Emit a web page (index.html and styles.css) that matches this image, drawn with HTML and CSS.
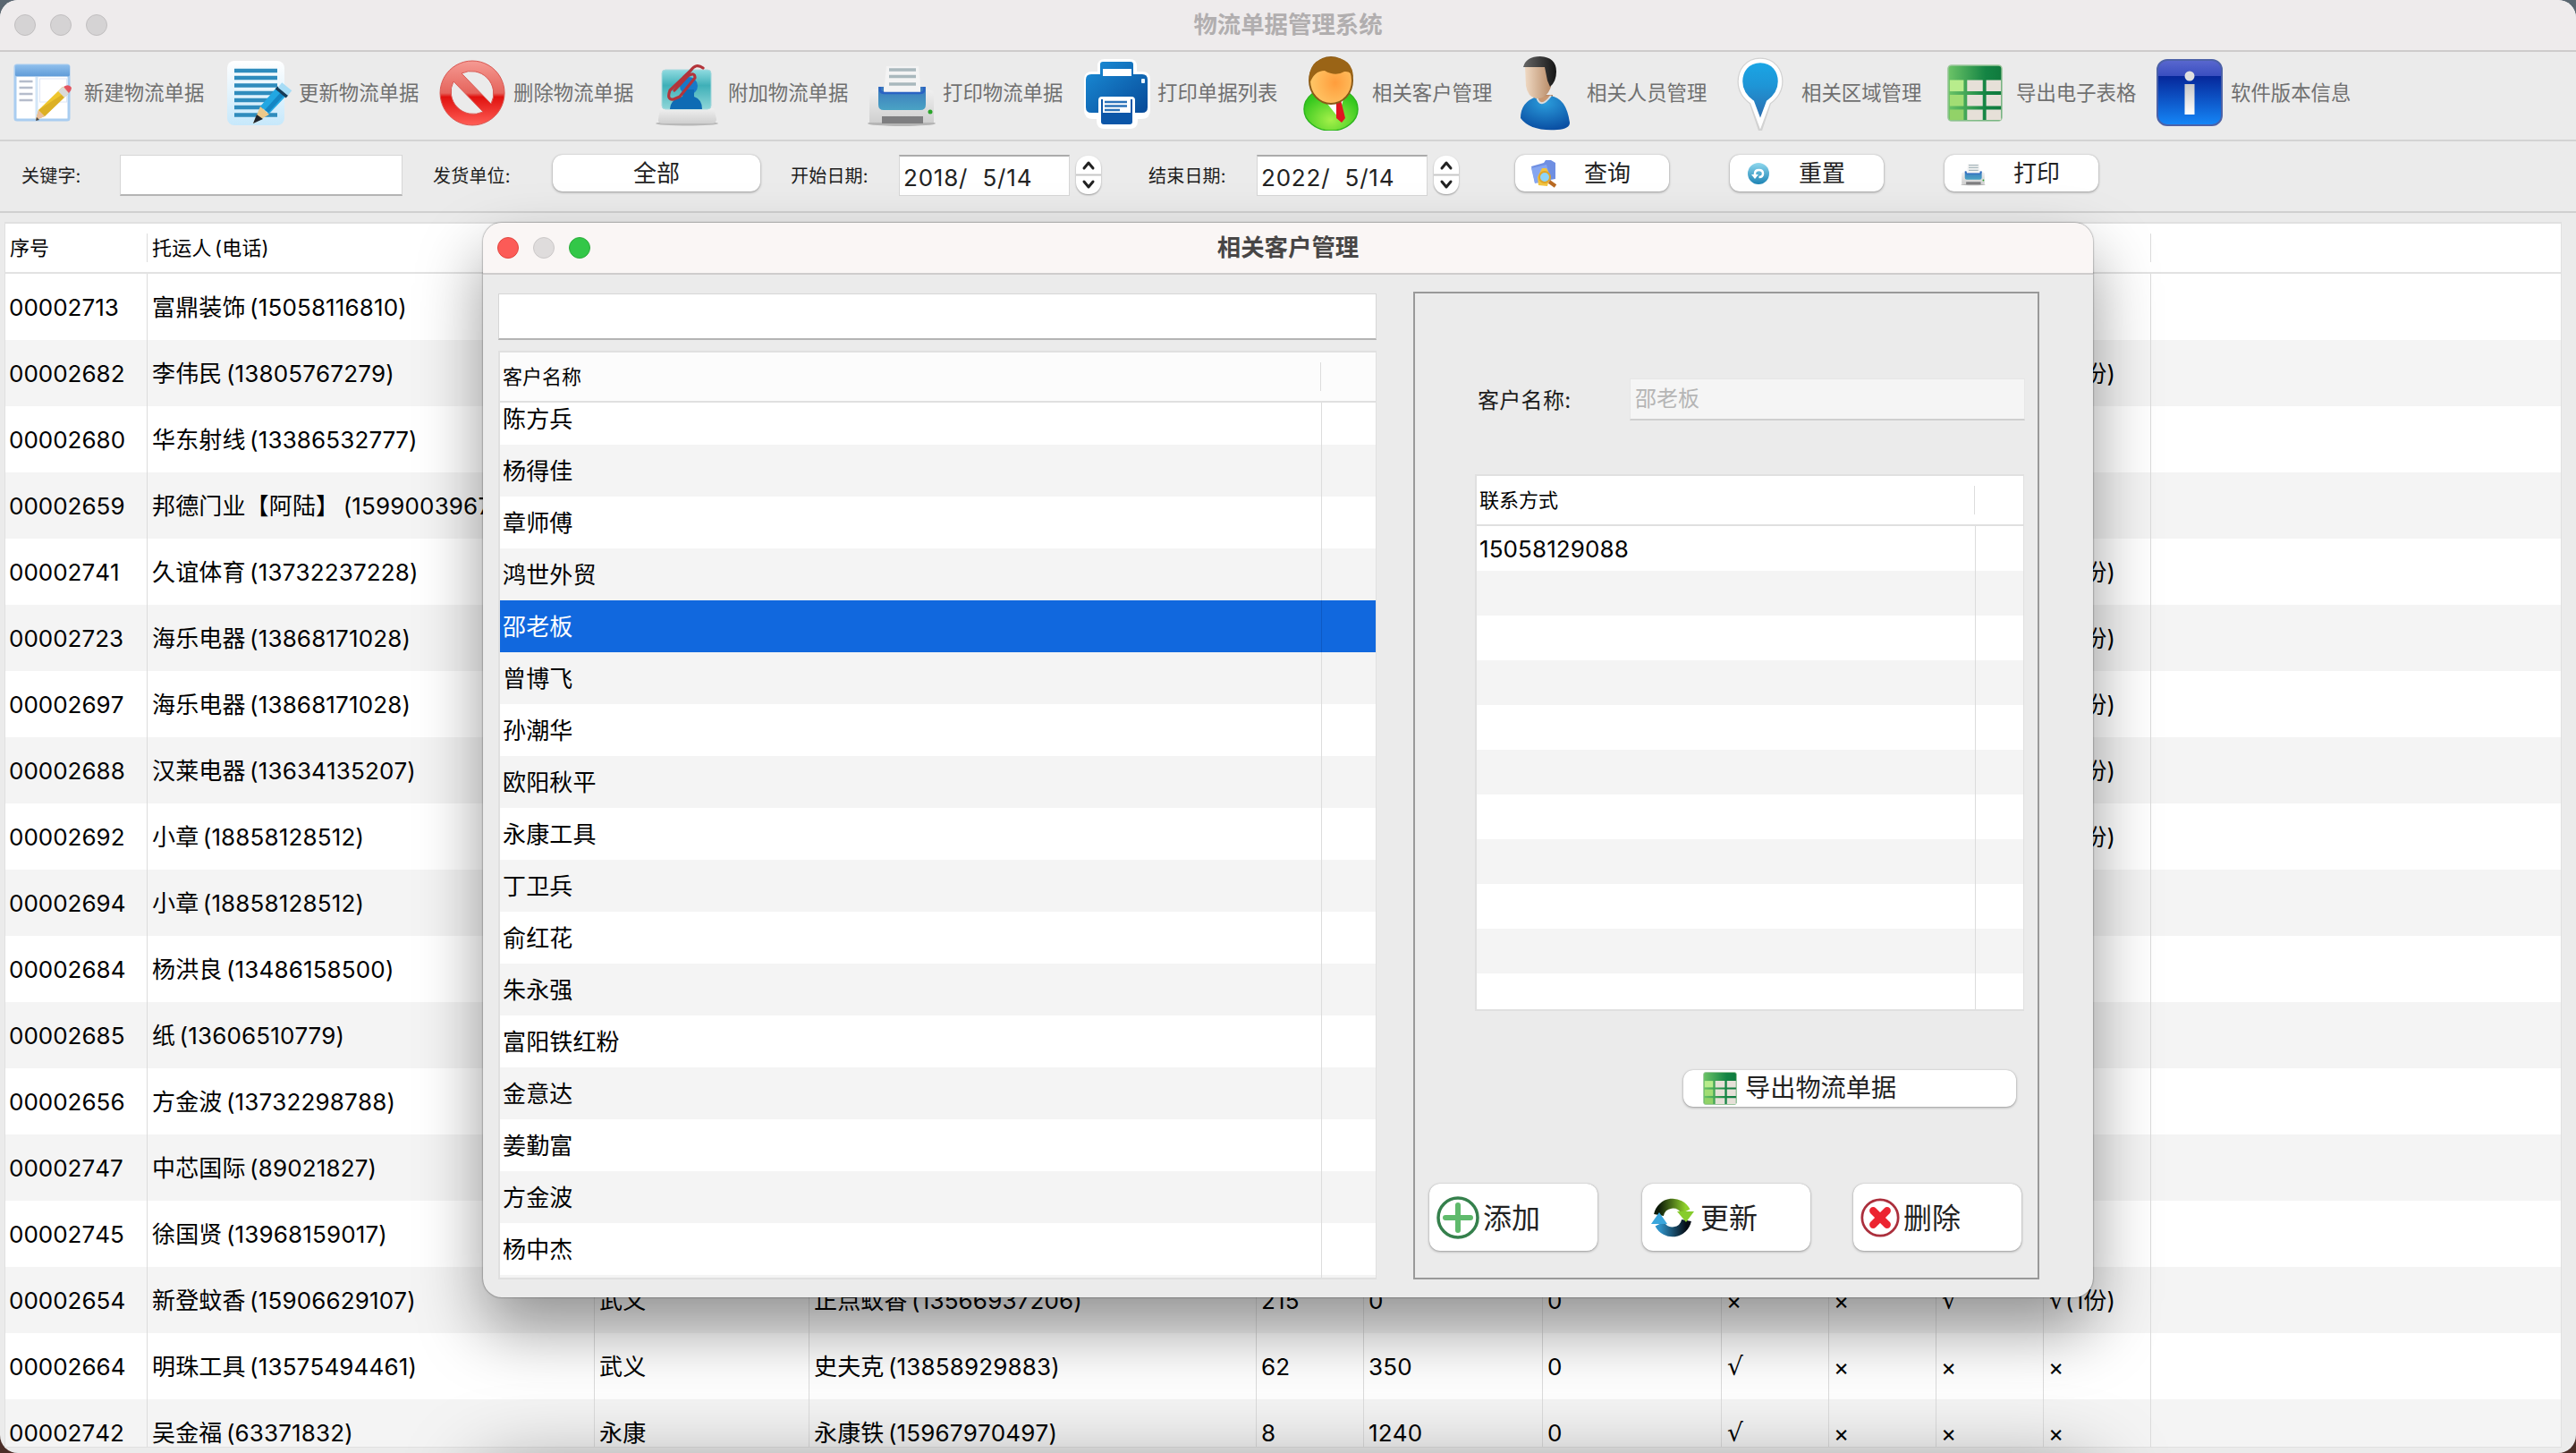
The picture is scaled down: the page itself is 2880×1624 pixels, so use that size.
FILE: index.html
```html
<!DOCTYPE html>
<html lang="zh-CN">
<head>
<meta charset="utf-8">
<title>物流单据管理系统</title>
<link rel="stylesheet" href="styles.css">
</head>
<body>
<svg class="defs" width="0" height="0" aria-hidden="true">
  <defs>
    <linearGradient id="gBlueBar" x1="0" y1="0" x2="0" y2="1"><stop offset="0" stop-color="#8fbfec"/><stop offset="1" stop-color="#5f9bd8"/></linearGradient>
    <linearGradient id="gPaper" x1="0" y1="0" x2="0" y2="1"><stop offset="0" stop-color="#ffffff"/><stop offset="1" stop-color="#c6e8fb"/></linearGradient>
    <linearGradient id="gNo" x1="0" y1="0" x2="0" y2="1"><stop offset="0" stop-color="#f59a93"/><stop offset=".5" stop-color="#e5645c"/><stop offset=".56" stop-color="#e0110e"/><stop offset="1" stop-color="#ff5e56"/></linearGradient>
    <linearGradient id="gTeal" x1="0" y1="0" x2="0" y2="1"><stop offset="0" stop-color="#8fdbe0"/><stop offset=".4" stop-color="#3fb0b8"/><stop offset="1" stop-color="#8ed6d8"/></linearGradient>
    <linearGradient id="gBlue" x1="0" y1="0" x2="1" y2="1"><stop offset="0" stop-color="#1a8ed8"/><stop offset="1" stop-color="#084a98"/></linearGradient>
    <linearGradient id="gTray" x1="0" y1="0" x2="0" y2="1"><stop offset="0" stop-color="#3b78bd"/><stop offset="1" stop-color="#4aa3c4"/></linearGradient>
    <linearGradient id="gGrey" x1="0" y1="0" x2="0" y2="1"><stop offset="0" stop-color="#f0f0f0"/><stop offset="1" stop-color="#cfcfcf"/></linearGradient>
    <radialGradient id="gFace" cx=".6" cy=".55" r=".6"><stop offset="0" stop-color="#ff9d3c"/><stop offset="1" stop-color="#ffc868"/></radialGradient>
    <radialGradient id="gGreen" cx=".5" cy=".75" r=".6"><stop offset="0" stop-color="#a5f04a"/><stop offset="1" stop-color="#35c81e"/></radialGradient>
    <linearGradient id="gSkin" x1="0" y1="0" x2="1" y2="0"><stop offset="0" stop-color="#efd9c3"/><stop offset="1" stop-color="#b98c68"/></linearGradient>
    <linearGradient id="gHair" x1="0" y1="0" x2="1" y2="0"><stop offset="0" stop-color="#666"/><stop offset="1" stop-color="#151515"/></linearGradient>
    <radialGradient id="gShirt" cx=".5" cy=".2" r=".8"><stop offset="0" stop-color="#2b9ddc"/><stop offset="1" stop-color="#0a4fa3"/></radialGradient>
    <linearGradient id="gPin" x1="0" y1="0" x2="0" y2="1"><stop offset="0" stop-color="#1aa7e6"/><stop offset=".4" stop-color="#1e95d6"/><stop offset="1" stop-color="#2f66a8"/></linearGradient>
    <linearGradient id="gSheet" x1="0" y1="0" x2="1" y2="0"><stop offset="0" stop-color="#6cc467"/><stop offset=".7" stop-color="#148444"/><stop offset="1" stop-color="#0f7a3d"/></linearGradient>
    <linearGradient id="gInfo" x1="0" y1="0" x2="0" y2="1"><stop offset="0" stop-color="#5a68cf"/><stop offset=".24" stop-color="#3a4fc0"/><stop offset=".25" stop-color="#06279a"/><stop offset="1" stop-color="#1587f8"/></linearGradient>
    <linearGradient id="gI" x1="0" y1="0" x2="0" y2="1"><stop offset="0" stop-color="#c8c8c8"/><stop offset="1" stop-color="#ffffff"/></linearGradient>
    <linearGradient id="gReset" x1="0" y1="0" x2="0" y2="1"><stop offset="0" stop-color="#8fd8ee"/><stop offset="1" stop-color="#1c83b4"/></linearGradient>
    <linearGradient id="gArrA" x1="0" y1="0" x2="1" y2="0"><stop offset="0" stop-color="#0c1a08"/><stop offset="1" stop-color="#8fd02c"/></linearGradient>
    <linearGradient id="gArrB" x1="0" y1="0" x2="1" y2="0"><stop offset="0" stop-color="#2f92c8"/><stop offset="1" stop-color="#050c14"/></linearGradient>
    <symbol id="sheet" viewBox="0 0 64 66">
      <rect x="1" y="1" width="62" height="64" rx="4" fill="url(#gSheet)" stroke="#9cc79c" stroke-width="1.5"/>
      <rect x="3" y="18" width="16" height="13" fill="#b8ec8c"/><rect x="3" y="35" width="16" height="13" fill="#a2dd74"/><rect x="3" y="52" width="16" height="12" fill="#92d268"/>
      <path d="M23 18h18v13h-18zM45 18h17v13h-17zM23 35h18v13h-18zM45 35h17v13h-17zM23 52h18v12h-18zM45 52h17v12h-17z" fill="#e6e0d8"/>
    </symbol>
    <symbol id="printer" viewBox="0 0 84 84">
      <ellipse cx="42" cy="76" rx="38" ry="3" fill="#b5b5b5"/>
      <path d="M6 42q1-4 8-4h56q7 0 8 4v33H6z" fill="url(#gGrey)"/>
      <path d="M25 12h36l3 30H22z" fill="#f4f4f4"/>
      <path d="M28 16h30M28 23.500h30M28 32h30" stroke="#a9b8bd" stroke-width="3.500"/>
      <path d="M16 35h6v6h41v-6h6v20q0 6-6 6H22q-6 0-6-6z" fill="url(#gTray)"/>
      <path d="M18 35v4q1 3 5 3h39q5 0 5-3v-4" fill="none" stroke="#2a63c4" stroke-width="2.500"/>
      <rect x="20" y="68" width="46" height="8" fill="#7e7e80"/><circle cx="74" cy="63" r="2.500" fill="#2aa52a"/>
    </symbol>
  </defs>
</svg>
<main class="window">
  <header class="titlebar">
    <div class="lights"><span class="light"></span><span class="light"></span><span class="light"></span></div>
    <h1 class="title">物流单据管理系统</h1>
  </header>
  <nav class="toolbar">
    <div class="tool"><svg class="tool-icon" viewBox="0 0 84 84"><rect x="11" y="11" width="60" height="61" rx="2" fill="#fff" stroke="#a9cdf0" stroke-width="3"/><rect x="11" y="10.500" width="61" height="13" rx="2" fill="url(#gBlueBar)"/><path d="M35 24v47" stroke="#d3e6f7" stroke-width="3"/><rect x="38.500" y="26" width="30" height="26" fill="#fff" stroke="#dfe6f5"/><path d="M15.500 29h15M15.500 36h15M15.500 43h15M15.500 50h15" stroke="#b5bccb" stroke-width="2.500"/><path d="M34 72l3-11 27-26 7 7-27 26z" fill="#efc62d"/><path d="M37 61l7 7 22-21-3-3z" fill="#c99a1c" opacity=".5"/><path d="M34 72l3-11 7 7z" fill="#eabf9c"/><path d="M34 73l1-4 3 3z" fill="#444"/><path d="M59 40l5-5 7 7-5 5z" fill="#dadada"/><path d="M65 35q6-4 9 1 0 3-3 6z" fill="#e25560"/></svg><span>新建物流单据</span></div>
    <div class="tool"><svg class="tool-icon" viewBox="0 0 84 84"><rect x="8" y="6" width="64" height="72" rx="8" fill="url(#gPaper)"/><path d="M16 17h48M16 25h48M16 33.500h48M16 42h44M16 50h38M16 58h32M16 66.500h48" stroke="#2f8cbd" stroke-width="4.500"/><path d="M45 57l18-21 11 9-19 20z" fill="#22a7e2"/><path d="M50 61l18-20 4 3-18 20z" fill="#1586c4"/><path d="M37 76l8-19 10 9z" fill="#ecc98a"/><path d="M37 76l4-10 7 5z" fill="#20242b"/><path d="M63 36l12 10" stroke="#153a56" stroke-width="4"/><path d="M67 33l11 9" stroke="#a6dcf6" stroke-width="7"/></svg><span>更新物流单据</span></div>
    <div class="tool"><svg class="tool-icon" viewBox="0 0 84 84"><path fill-rule="evenodd" d="M42 6a36 36 0 1 0 .1 0zM30 20a25 25 0 0 1 33 34zM21 29a25 25 0 0 0 33 34z" fill="url(#gNo)" stroke="#d95852" stroke-width="1"/></svg><span>删除物流单据</span></div>
    <div class="tool"><svg class="tool-icon" viewBox="0 0 84 84"><ellipse cx="42" cy="76" rx="35" ry="2.500" fill="#b9b9b9"/><path d="M12 59h60l3 12q0 5-5 5H15q-6 0-5-5z" fill="url(#gGrey)"/><rect x="14" y="16" width="55" height="44" rx="4" fill="url(#gTeal)" stroke="#a8d8dc"/><circle cx="44" cy="34" r="10" fill="#1878c8"/><path d="M23 60q1-12 14-14l1-8h12v8q9 3 9 14z" fill="#0e6bb4"/><path d="M60 14q-8-6-14 3L23 39q-4 11 4 10l7-3 17-21q0-7-8-2L28 39" fill="none" stroke="#b3343a" stroke-width="3.200" stroke-linecap="round" stroke-linejoin="round"/></svg><span>附加物流单据</span></div>
    <div class="tool"><svg class="tool-icon" viewBox="0 0 84 84"><use href="#printer"/></svg><span>打印物流单据</span></div>
    <div class="tool"><svg class="tool-icon" viewBox="0 0 84 84"><path d="M24 12q0-5 5-5h28q5 0 5 5v9h9q6 0 6 6v34q0 7-7 7h-7v5q0 6-6 6H29q-6 0-6-6v-5h-7q-7 0-7-7V27q0-6 6-6h9z" fill="#fff" stroke="#fff" stroke-width="6"/><path d="M24 10q0-3 3-3h31q3 0 3 3v11h10q6 0 6 6v31q0 6-6 6H14q-6 0-6-6V27q0-6 6-6h10z" fill="url(#gBlue)"/><rect x="27" y="15" width="32" height="8" fill="#fff"/><rect x="70" y="26" width="4" height="5" rx="1" fill="#e8f5ff"/><rect x="22" y="46" width="41" height="33" rx="4" fill="#fff"/><path d="M25 49h35v25q0 3-3 3H28q-3 0-3-3z" fill="#0b56a8"/><rect x="27" y="49" width="31" height="15" fill="#fff"/><path d="M29 52h25M29 56.500h25M29 61h17" stroke="#2b72b8" stroke-width="2.500"/></svg><span>打印单据列表</span></div>
    <div class="tool"><svg class="tool-icon" viewBox="0 0 84 84"><ellipse cx="42" cy="60" rx="30" ry="24" fill="url(#gGreen)" stroke="#2cb51c" stroke-width="1.500"/><path d="M34 49h22l-6 20z" fill="#fff"/><path d="M47 50h6l1 4 4 16-4 5-6-5 0-15z" fill="#e01520"/><ellipse cx="42" cy="28" rx="24" ry="26" fill="url(#gFace)" stroke="#8a5a17" stroke-width="2"/><path d="M18 32Q15 3 42 2q25 0 25 24-2-9-10-8-10 6-22-1-12 0-17 15z" fill="#9a6416"/></svg><span>相关客户管理</span></div>
    <div class="tool"><svg class="tool-icon" viewBox="0 0 84 84"><path d="M33 44h17v16H33z" fill="#b98a68"/><path d="M14 70q0-18 18-24 9 9 15-1 18 2 22 30 0 7-14 8-30 2-41-13z" fill="url(#gShirt)"/><path d="M32 46q4 15 16-1" fill="#c99872" stroke="#d7dce0" stroke-width="2"/><path d="M19 13h25l4 22q-5 14-17 13-9-2-11-14z" fill="url(#gSkin)"/><path d="M17 13Q20 1 36 1q18 1 18 17 0 11-7 17l-3-7-3-15z" fill="url(#gHair)"/></svg><span>相关人员管理</span></div>
    <div class="tool"><svg class="tool-icon" viewBox="0 0 84 84"><path d="M42 6C27 6 20 18 20 29c0 10 6 18 13 23l9 27 9-27c7-5 13-13 13-23C64 18 57 6 42 6z" fill="url(#gPin)" stroke="#d2d2d2" stroke-width="7"/><path d="M42 6C27 6 20 18 20 29c0 10 6 18 13 23l9 24 9-24c7-5 13-13 13-23C64 18 57 6 42 6z" fill="url(#gPin)" stroke="#fff" stroke-width="4.500"/></svg><span>相关区域管理</span></div>
    <div class="tool"><svg class="tool-icon" viewBox="0 0 84 84"><use href="#sheet" x="10" y="10" width="64" height="64"/></svg><span>导出电子表格</span></div>
    <div class="tool"><svg class="tool-icon" viewBox="0 0 84 84"><rect x="6" y="5" width="72" height="73" rx="11" fill="url(#gInfo)" stroke="#4c62a8" stroke-width="2"/><circle cx="42" cy="23" r="5.500" fill="#e0e0e0"/><rect x="36.500" y="32" width="11" height="34" fill="url(#gI)"/></svg><span>软件版本信息</span></div>
  </nav>
  <section class="filters">
    <label class="field-label label-key">关键字:</label><div class="input keyword"></div>
    <label class="field-label label-unit">发货单位:</label><button class="btn popup">全部</button>
    <label class="field-label label-start">开始日期:</label><div class="input date">2018/&nbsp; 5/14</div>
    <div class="stepper"><svg viewBox="0 0 28 43"><path d="M0 21.500h28" stroke="#c6c6c6" stroke-width="2"/><path d="M9 14l5-6 5 6M9 29l5 6 5-6" fill="none" stroke="#222" stroke-width="3" stroke-linecap="round" stroke-linejoin="round"/></svg></div>
    <label class="field-label label-end">结束日期:</label><div class="input date">2022/&nbsp; 5/14</div>
    <div class="stepper"><svg viewBox="0 0 28 43"><path d="M0 21.500h28" stroke="#c6c6c6" stroke-width="2"/><path d="M9 14l5-6 5 6M9 29l5 6 5-6" fill="none" stroke="#222" stroke-width="3" stroke-linecap="round" stroke-linejoin="round"/></svg></div>
    <button class="btn action first"><svg viewBox="0 0 32 32"><path d="M2 8l14-4 2-3h6l5 3v18L6 26z" fill="#6f8fe2"/><path d="M2 10l17-4 5 18L6 27z" fill="#86a6f0"/><path d="M14 10h5l4 8-3 12-10-1-1-9z" fill="#f2c440"/><circle cx="17" cy="20" r="6" fill="#8fd4f8" stroke="#e0a528" stroke-width="2"/><path d="M22 25l7 5" stroke="#b96a22" stroke-width="4"/></svg><span>查询</span></button>
    <button class="btn action"><svg viewBox="0 0 32 32"><circle cx="16" cy="16" r="12" fill="url(#gReset)"/><path d="M12 18v-2q0-4 4.500-4t4.500 4-4.500 4" fill="none" stroke="#fff" stroke-width="2.500"/><path d="M8 17h8l-4 5z" fill="#fff"/></svg><span>重置</span></button>
    <button class="btn action"><svg viewBox="0 0 32 32"><use href="#printer" x="1" y="1" width="30" height="30"/></svg><span>打印</span></button>
  </section>
  <section class="orders">
    <div class="orders-head"><b>序号</b><b>托运人 (电话)</b><b></b><b></b><b></b><b></b><b></b><b></b><b></b><b></b><b></b><b></b></div>
    <div class="order"><i>00002713</i><i>富鼎装饰 (15058116810)</i><i></i><i></i><i></i><i></i><i></i><i></i><i></i><i></i><i></i></div>
    <div class="order"><i>00002682</i><i>李伟民 (13805767279)</i><i></i><i></i><i></i><i></i><i></i><i></i><i></i><i></i><i><span class="tick">√</span>(1份)</i></div>
    <div class="order"><i>00002680</i><i>华东射线 (13386532777)</i><i></i><i></i><i></i><i></i><i></i><i></i><i></i><i></i><i></i></div>
    <div class="order"><i>00002659</i><i>邦德门业【阿陆】 (1599003967</i><i></i><i></i><i></i><i></i><i></i><i></i><i></i><i></i><i></i></div>
    <div class="order"><i>00002741</i><i>久谊体育 (13732237228)</i><i></i><i></i><i></i><i></i><i></i><i></i><i></i><i></i><i><span class="tick">√</span>(1份)</i></div>
    <div class="order"><i>00002723</i><i>海乐电器 (13868171028)</i><i></i><i></i><i></i><i></i><i></i><i></i><i></i><i></i><i><span class="tick">√</span>(1份)</i></div>
    <div class="order"><i>00002697</i><i>海乐电器 (13868171028)</i><i></i><i></i><i></i><i></i><i></i><i></i><i></i><i></i><i><span class="tick">√</span>(1份)</i></div>
    <div class="order"><i>00002688</i><i>汉莱电器 (13634135207)</i><i></i><i></i><i></i><i></i><i></i><i></i><i></i><i></i><i><span class="tick">√</span>(1份)</i></div>
    <div class="order"><i>00002692</i><i>小章 (18858128512)</i><i></i><i></i><i></i><i></i><i></i><i></i><i></i><i></i><i><span class="tick">√</span>(1份)</i></div>
    <div class="order"><i>00002694</i><i>小章 (18858128512)</i><i></i><i></i><i></i><i></i><i></i><i></i><i></i><i></i><i></i></div>
    <div class="order"><i>00002684</i><i>杨洪良 (13486158500)</i><i></i><i></i><i></i><i></i><i></i><i></i><i></i><i></i><i></i></div>
    <div class="order"><i>00002685</i><i>纸 (13606510779)</i><i></i><i></i><i></i><i></i><i></i><i></i><i></i><i></i><i></i></div>
    <div class="order"><i>00002656</i><i>方金波 (13732298788)</i><i></i><i></i><i></i><i></i><i></i><i></i><i></i><i></i><i></i></div>
    <div class="order"><i>00002747</i><i>中芯国际 (89021827)</i><i></i><i></i><i></i><i></i><i></i><i></i><i></i><i></i><i></i></div>
    <div class="order"><i>00002745</i><i>徐国贤 (13968159017)</i><i></i><i></i><i></i><i></i><i></i><i></i><i></i><i></i><i></i></div>
    <div class="order"><i>00002654</i><i>新登蚊香 (15906629107)</i><i>武义</i><i>正点蚊香 (13566937206)</i><i>215</i><i>0</i><i>0</i><i>×</i><i>×</i><i><span class="tick">√</span></i><i><span class="tick">√</span>(1份)</i></div>
    <div class="order"><i>00002664</i><i>明珠工具 (13575494461)</i><i>武义</i><i>史夫克 (13858929883)</i><i>62</i><i>350</i><i>0</i><i><span class="tick">√</span></i><i>×</i><i>×</i><i>×</i></div>
    <div class="order"><i>00002742</i><i>吴金福 (63371832)</i><i>永康</i><i>永康铁 (15967970497)</i><i>8</i><i>1240</i><i>0</i><i><span class="tick">√</span></i><i>×</i><i>×</i><i>×</i></div>
  </section>
  <div class="under-shade"></div>
</main>

<section class="dialog">
  <header class="titlebar dialog-bar">
    <div class="lights"><span class="light close"></span><span class="light"></span><span class="light zoom"></span></div>
    <h2 class="title">相关客户管理</h2>
  </header>
  <div class="dialog-body">
    <div class="customers">
      <div class="input search"></div>
      <div class="list">
        <div class="list-head"><b>客户名称</b></div>
        <div class="list-rows customer-rows">
          <p>陈方兵</p><p>杨得佳</p><p>章师傅</p><p>鸿世外贸</p><p class="selected">邵老板</p><p>曾博飞</p><p>孙潮华</p><p>欧阳秋平</p><p>永康工具</p><p>丁卫兵</p><p>俞红花</p><p>朱永强</p><p>富阳铁红粉</p><p>金意达</p><p>姜勤富</p><p>方金波</p><p>杨中杰</p><p></p>
        </div>
      </div>
    </div>
    <div class="detail">
      <div class="name-row"><label>客户名称:</label><div class="input disabled">邵老板</div></div>
      <div class="list contacts">
        <div class="list-head"><b>联系方式</b></div>
        <div class="list-rows contact-rows">
          <p>15058129088</p><p></p><p></p><p></p><p></p><p></p><p></p><p></p><p></p><p></p><p></p>
        </div>
      </div>
      <button class="btn export"><svg viewBox="0 0 64 66" preserveAspectRatio="none"><use href="#sheet" width="64" height="66"/></svg><span>导出物流单据</span></button>
      <div class="detail-actions">
        <button class="btn big"><svg viewBox="0 0 48 48"><circle cx="24" cy="24" r="22" fill="#fff" stroke="#35804c" stroke-width="3.500"/><path d="M24 10v28M10 24h28" stroke="#5fba6c" stroke-width="6" stroke-linecap="round"/></svg><span>添加</span></button>
        <button class="btn big second"><svg viewBox="0 0 48 48"><path d="M8.500 21A16 16 0 0 1 38.500 17" fill="none" stroke="url(#gArrA)" stroke-width="11"/><path d="M39.500 27A16 16 0 0 1 9.500 31" fill="none" stroke="url(#gArrB)" stroke-width="11"/><path d="M29 17h19l-9 12z" fill="#86cc2c"/><path d="M0 31h18L9 18z" fill="#3aa6dc"/></svg><span>更新</span></button>
        <button class="btn big third"><svg viewBox="0 0 48 48"><circle cx="24" cy="24" r="22" fill="#fff" stroke="#ab2f3c" stroke-width="3"/><path d="M15.500 15.500l17 17M32.500 15.500l-17 17" stroke="#ec2430" stroke-width="9" stroke-linecap="round"/></svg><span>删除</span></button>
      </div>
    </div>
  </div>
</section>
</body>
</html>
```
FILE: styles.css
```css
* { box-sizing: border-box; }
html, body { margin: 0; width: 2880px; height: 1624px; overflow: hidden; }
body {
  position: relative;
  background: linear-gradient(#5a6670, #4b2e28);
  font-family: "Inter", "Noto Sans CJK SC", sans-serif;
  font-size: 26px;
  color: #000;
}
.defs { position: absolute; }
h1, h2, p { margin: 0; }
i { font-style: normal; }
button { font-family: inherit; border: 0; }

.window {
  position: relative;
  width: 2880px;
  height: 1624px;
  display: flex;
  flex-direction: column;
  overflow: hidden;
  border-radius: 20px;
  background: #ebebeb;
}
.titlebar {
  position: relative;
  flex: none;
  height: 58px;
  display: flex;
  align-items: center;
  justify-content: center;
  border-bottom: 2px solid #cecccc;
  background: #eeebec;
}
.title { padding-bottom: 2px; font-size: 26.4px; line-height: 40px; font-weight: 700; color: #b1aeaf; }
.lights { position: absolute; left: 16px; top: 16px; display: flex; gap: 16px; }
.light { width: 24px; height: 24px; border-radius: 50%; background: #d5d3d4; border: 1px solid #c0bebf; }

.toolbar {
  flex: none;
  height: 100px;
  display: flex;
  padding-left: 6px;
  border-bottom: 2px solid #d3d3d3;
}
.tool {
  width: 240px;
  display: flex;
  align-items: center;
  gap: 4px;
  padding-bottom: 7px;
  font-size: 22.4px;
  color: #707070;
  white-space: nowrap;
}
.tool span { padding-bottom: 3px; }
.tool-icon { width: 84px; height: 84px; flex: none; }

.filters {
  flex: none;
  height: 80px;
  display: flex;
  align-items: flex-start;
  padding-top: 15px;
  border-bottom: 2px solid #d0d0d0;
}
.field-label { font-size: 20px; line-height: 30px; margin-top: 9px; letter-spacing: .2px; color: #1c1c1c; white-space: nowrap; }
.label-key { width: 110px; margin-left: 24px; }
.label-unit { width: 134px; margin-left: 34px; }
.label-start { width: 121px; margin-left: 34px; }
.label-end { width: 121px; margin-left: 52px; }
.input { background: #fff; border: 1px solid #d6d6d6; border-bottom: 2px solid #b4b4b4; }
.keyword { width: 316px; height: 46px; }
.date {
  width: 191px;
  height: 46px;
  padding-left: 4px;
  border-top: 2px solid #ababab;
  border-bottom: 1px solid #d6d6d6;
  font-size: 26px;
  letter-spacing: .8px;
  line-height: 47px;
  color: #222;
  white-space: pre;
}
.stepper { width: 28px; height: 43px; margin: 1px 1px 0 7px; border-radius: 13px; background: #fff; box-shadow: 0 1px 2px rgba(0,0,0,.35); }
.stepper svg { display: block; width: 28px; height: 43px; }
.btn {
  display: flex;
  align-items: center;
  padding: 0;
  border-radius: 11px;
  background: #fff;
  box-shadow: 0 0 1px rgba(0,0,0,.25), 0 1px 3px rgba(0,0,0,.35);
  color: #222;
  font-size: 26px;
  white-space: nowrap;
}
.popup { width: 232px; height: 41px; justify-content: center; padding-bottom: 4px; }
.action { width: 172px; height: 41px; padding-left: 16px; gap: 29px; margin-right: 68px; }
.action span { padding-bottom: 4px; }
.action.first { margin-left: 62px; }
.action svg { width: 32px; height: 32px; flex: none; }

.orders {
  flex: none;
  height: 1370px;
  margin: 10px 16px 0 5px;
  border: 1px solid #e0e0e0;
  border-top-width: 2px;
  overflow: hidden;
  background: #fff;
}
.orders-head, .order {
  display: grid;
  grid-template-columns: 159px 500px 240px 500px 120px 200px 200px 120px 120px 120px 120px 1fr;
  word-spacing: -3px;
}
.orders-head { height: 56px; align-items: center; border-bottom: 2px solid #e2e2e2; font-size: 22px; }
.orders-head b { height: 32px; line-height: 33px; padding-left: 5px; font-weight: 400; border-right: 1px solid #dcdcdc; }
.orders-head b:nth-child(2) { letter-spacing: .2px; }
.orders-head b:last-child { border: 0; }
.order { height: 74px; line-height: 76px; white-space: nowrap; font-kerning: none; }
.order:nth-child(odd) { background: #f4f4f4; }
.order i { height: 74px; padding-left: 5px; border-right: 1px solid #dcdcdc; overflow: hidden; letter-spacing: .15px; }
.order i:first-child { padding-left: 4px; letter-spacing: 0; }
.tick { display: inline-block; width: 18px; margin-left: 1px; font-family: "DejaVu Sans", sans-serif; font-size: 28px; line-height: 1; }
.under-shade {
  position: absolute;
  left: 540px;
  top: 1644px;
  width: 1800px;
  height: 200px;
  box-shadow: 0 0 90px rgba(0,0,0,.4);
}

.dialog {
  position: absolute;
  left: 540px;
  top: 249px;
  width: 1800px;
  height: 1201px;
  display: flex;
  flex-direction: column;
  border-radius: 21px;
  background: #ebebeb;
  box-shadow: 0 0 2px rgba(0,0,0,.65), 0 36px 72px rgba(0,0,0,.4);
}
.dialog-bar { border-radius: 21px 21px 0 0; background: #faf6f5; }
.dialog-bar .title { color: #484646; }
.dialog-bar .light { background: #dfdcdc; border-color: #cbc8c8; }
.dialog-bar .light.close { background: #fc5b57; border-color: #e2463f; }
.dialog-bar .light.zoom { background: #33c748; border-color: #2aac3a; }
.dialog-body { flex: 1; display: flex; align-items: flex-start; padding: 19px 60px 0 17px; }
.customers { width: 982px; padding-top: 2px; }
.search { height: 52px; }
.list { border: 1px solid #e0e0e0; border-width: 2px 1px 2px 2px; background: #fff; overflow: hidden; }
.customers .list { height: 1038px; margin-top: 12px; }
.list-head {
  position: relative;
  height: 56px;
  display: grid;
  grid-template-columns: 1fr 61px;
  align-items: center;
  border-bottom: 2px solid #e0e0e0;
  background: #fcfcfc;
  font-size: 22px;
}
.list-head b { height: 32px; line-height: 32px; padding-left: 3px; font-weight: 400; border-right: 1px solid #dcdcdc; }
.list-rows { display: flex; flex-direction: column; }
.list-rows p { flex: none; padding-left: 3px; background: linear-gradient(to left, transparent 60px, #dcdcdc 60px, #dcdcdc 61px, transparent 61px); }
.customer-rows { height: 978px; overflow: hidden; letter-spacing: .15px; }
.customer-rows p { height: 58px; line-height: 60px; }
.customer-rows p:first-child { height: 47px; line-height: 38px; }
.customer-rows p:nth-child(even) { background-color: #f4f4f4; }
.customer-rows p.selected { color: #fff; background: linear-gradient(to left, transparent 60px, #0e59c4 60px, #0e59c4 61px, transparent 61px) #1168de; }
.detail { width: 700px; height: 1104px; margin-left: 41px; border: 2px solid #999; }
.name-row { display: flex; height: 47px; margin: 95px 0 0 70px; }
.name-row label { width: 170px; font-size: 24px; line-height: 49px; letter-spacing: .3px; color: #1c1c1c; }
.disabled { width: 442px; height: 47px; padding-left: 5px; border-color: #e6e6e6; border-bottom-color: #cfcfcf; background: #f5f5f5; color: #b5b5b5; font-size: 24px; line-height: 43px; }
.contacts { width: 614px; height: 600px; margin: 60px 0 0 67px; }
.contacts .list-head { grid-template-columns: 1fr 54px; background: #fff; }
.contact-rows p { height: 50px; line-height: 51px; font-kerning: none; letter-spacing: .1px; background: linear-gradient(to left, transparent 53px, #dcdcdc 53px, #dcdcdc 54px, transparent 54px); }
.contact-rows p:nth-child(even) { background-color: #f4f4f4; }
.export { width: 372px; height: 41px; margin: 66px 0 0 300px; padding-left: 22px; gap: 9px; font-size: 28.2px; }
.export svg { width: 38px; height: 37px; }
.export span { padding-bottom: 6px; }
.detail-actions { display: flex; margin: 86px 0 0 16px; }
.big { width: 188px; height: 75px; padding-left: 8px; gap: 4px; border-radius: 12px; font-size: 32px; }
.big svg { width: 48px; height: 48px; }
.big span { padding-bottom: 4px; }
.second { margin-left: 50px; padding-left: 10px; gap: 7px; }
.third { margin-left: 48px; gap: 4px; }
.third svg { width: 44px; height: 44px; }
```
